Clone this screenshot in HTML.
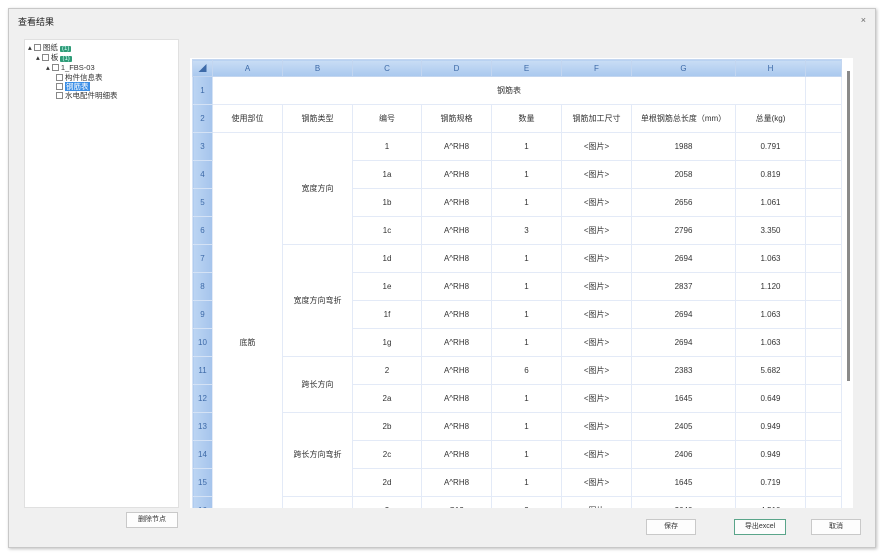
<!DOCTYPE html>
<html><head><meta charset="utf-8"><style>
*{margin:0;padding:0;box-sizing:border-box}
body{width:880px;height:558px;background:#fff;font-family:"Liberation Sans","Noto Sans CJK SC",sans-serif;position:relative;overflow:hidden;color:#333}
.dlg{position:absolute;left:8px;top:8px;width:868px;height:540px;background:#f0f0f0;border:1px solid #c8c8c8;box-shadow:1px 1px 3px rgba(0,0,0,.25)}
.title{position:absolute;left:9px;top:6px;font-size:9px;color:#222}
.close{position:absolute;right:9px;top:6px;font-size:9px;color:#666}
.tree{position:absolute;left:15px;top:30px;width:155px;height:469px;background:#fff;border:1px solid #e0e0e0;font-size:7.5px}
.tn{position:absolute;white-space:nowrap;line-height:9px}
.cb{display:inline-block;width:7px;height:7px;border:1px solid #888;background:#fff;vertical-align:-1px;margin-right:2px}
.tag{background:#2f9c78;color:#dff;padding:0 2px;border-radius:1px;font-size:6px}
.sel{background:#3a8ee6;color:#fff;padding:0 1px}
.grid{position:absolute;left:181px;top:49px;width:663px;height:450px;background:#fff;overflow:hidden}
table{border-collapse:collapse;table-layout:fixed;position:absolute;left:2px;top:1px}
td{border:1px solid #e3eaf7;text-align:center;font-size:8px;height:28px;color:#333;overflow:hidden;white-space:nowrap}
tr.h td{height:17px;background:linear-gradient(#c9ddf5,#a9c8ee);color:#3d6aa8;border-color:#c3d6f0;font-size:8px}
td.r{background:linear-gradient(90deg,#bcd5f3,#a5c4ec);color:#3d6aa8;border-color:#d4e2f5;font-size:8px}
.sb{position:absolute;left:838px;top:62px;width:3px;height:310px;background:#8a8a8a}
.btn{position:absolute;height:16px;background:#fdfdfd;border:1px solid #c9c9c9;font-size:7px;text-align:center;line-height:14px;color:#333}
</style></head><body>
<div class="dlg">
<div class="title">查看结果</div><div class="close">×</div>
<div class="tree">
<div class="tn" style="left:3px;top:3px">▴ <span class="cb"></span>图纸 <span class="tag">(1)</span></div>
<div class="tn" style="left:11px;top:13px">▴ <span class="cb"></span>板 <span class="tag">(1)</span></div>
<div class="tn" style="left:21px;top:23px">▴ <span class="cb"></span>1_FBS-03</div>
<div class="tn" style="left:31px;top:33px"><span class="cb"></span>构件信息表</div>
<div class="tn" style="left:31px;top:42px"><span class="cb"></span><span class="sel">钢筋表</span></div>
<div class="tn" style="left:31px;top:51px"><span class="cb"></span>水电配件明细表</div>
</div>
<div class="grid">
<table>
<colgroup><col style="width:20px"><col style="width:70px"><col style="width:70px"><col style="width:69px"><col style="width:70px"><col style="width:70px"><col style="width:70px"><col style="width:104px"><col style="width:70px"><col style="width:36px"></colgroup>
<tr class="h"><td>◢</td><td>A</td><td>B</td><td>C</td><td>D</td><td>E</td><td>F</td><td>G</td><td>H</td><td></td></tr>
<tr><td class="r">1</td><td colspan="8">钢筋表</td><td></td></tr>
<tr><td class="r">2</td><td>使用部位</td><td>钢筋类型</td><td>编号</td><td>钢筋规格</td><td>数量</td><td>钢筋加工尺寸</td><td>单根钢筋总长度（mm）</td><td>总量(kg)</td><td></td></tr>
<tr><td class="r">3</td><td rowspan="15">底筋</td><td rowspan="4">宽度方向</td><td>1</td><td>A^RH8</td><td>1</td><td>&lt;图片&gt;</td><td>1988</td><td>0.791</td><td></td></tr>
<tr><td class="r">4</td><td>1a</td><td>A^RH8</td><td>1</td><td>&lt;图片&gt;</td><td>2058</td><td>0.819</td><td></td></tr>
<tr><td class="r">5</td><td>1b</td><td>A^RH8</td><td>1</td><td>&lt;图片&gt;</td><td>2656</td><td>1.061</td><td></td></tr>
<tr><td class="r">6</td><td>1c</td><td>A^RH8</td><td>3</td><td>&lt;图片&gt;</td><td>2796</td><td>3.350</td><td></td></tr>
<tr><td class="r">7</td><td rowspan="4">宽度方向弯折</td><td>1d</td><td>A^RH8</td><td>1</td><td>&lt;图片&gt;</td><td>2694</td><td>1.063</td><td></td></tr>
<tr><td class="r">8</td><td>1e</td><td>A^RH8</td><td>1</td><td>&lt;图片&gt;</td><td>2837</td><td>1.120</td><td></td></tr>
<tr><td class="r">9</td><td>1f</td><td>A^RH8</td><td>1</td><td>&lt;图片&gt;</td><td>2694</td><td>1.063</td><td></td></tr>
<tr><td class="r">10</td><td>1g</td><td>A^RH8</td><td>1</td><td>&lt;图片&gt;</td><td>2694</td><td>1.063</td><td></td></tr>
<tr><td class="r">11</td><td rowspan="2">跨长方向</td><td>2</td><td>A^RH8</td><td>6</td><td>&lt;图片&gt;</td><td>2383</td><td>5.682</td><td></td></tr>
<tr><td class="r">12</td><td>2a</td><td>A^RH8</td><td>1</td><td>&lt;图片&gt;</td><td>1645</td><td>0.649</td><td></td></tr>
<tr><td class="r">13</td><td rowspan="3">跨长方向弯折</td><td>2b</td><td>A^RH8</td><td>1</td><td>&lt;图片&gt;</td><td>2405</td><td>0.949</td><td></td></tr>
<tr><td class="r">14</td><td>2c</td><td>A^RH8</td><td>1</td><td>&lt;图片&gt;</td><td>2406</td><td>0.949</td><td></td></tr>
<tr><td class="r">15</td><td>2d</td><td>A^RH8</td><td>1</td><td>&lt;图片&gt;</td><td>1645</td><td>0.719</td><td></td></tr>
<tr><td class="r">16</td><td rowspan="2"></td><td>3</td><td>C12</td><td>2</td><td>&lt;图片&gt;</td><td>2640</td><td>4.510</td><td></td></tr>
<tr><td class="r">17</td><td>3a</td><td>C12</td><td>1</td><td>&lt;图片&gt;</td><td>2640</td><td>2.255</td><td></td></tr>
</table>
</div>
<div class="sb"></div>
<div class="btn" style="left:117px;top:503px;width:52px">删除节点</div>
<div class="btn" style="left:637px;top:510px;width:50px">保存</div>
<div class="btn" style="left:725px;top:510px;width:52px;border:1px solid #5aa58a">导出excel</div>
<div class="btn" style="left:802px;top:510px;width:50px">取消</div>
</div>
</body></html>
